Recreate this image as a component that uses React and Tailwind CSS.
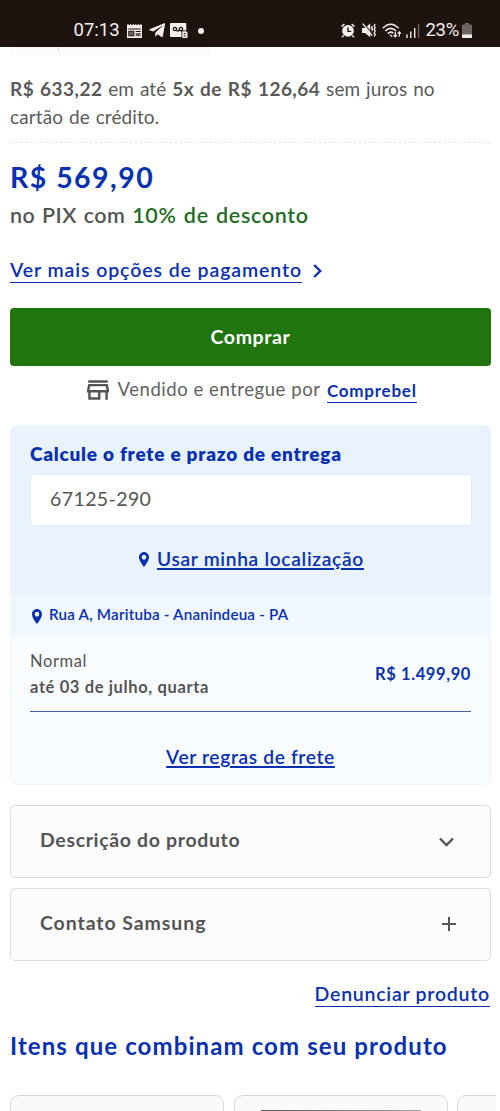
import React, { useState } from "react";

const PinIcon = ({ className }) => (
  <svg viewBox="5 2 14 20" className={className} fill="currentColor" fillRule="evenodd" preserveAspectRatio="none">
    <path d="M12 2C8.13 2 5 5.13 5 9c0 5.25 7 13 7 13s7-7.75 7-13c0-3.87-3.13-7-7-7zm0 10.2a3.2 3.2 0 1 1 0-6.4 3.2 3.2 0 0 1 0 6.4z" />
  </svg>
);

const StoreIcon = () => (
  <svg viewBox="3 4 18 16" className="w-[22px] h-5 text-[#555555]" fill="currentColor">
    <path d="M18.36 9l.6 3H5.04l.6-3h12.72M20 4H4v2h16V4zm0 3H4l-1 5v2h1v6h10v-6h4v6h2v-6h1v-2l-1-5zM6 18v-4h6v4H6z" />
  </svg>
);

function StatusBar() {
  return (
    <header className="flex items-center h-[47px] pt-[14px] pl-[73.5px] bg-[#1f130f] text-[#f3efee] font-[Roboto,sans-serif] text-[18.5px]">
      <span className="w-[53px]">07:13</span>

      {/* News */}
      <svg viewBox="0 0 15 14" className="w-[15px] h-[14px] shrink-0">
        <path d="M0 1h15v13H0z" fill="currentColor" />
        <path d="M1 0v2M3.6 0v2M6.2 0v2M8.8 0v2M11.4 0v2M14 0v2" stroke="currentColor" strokeWidth="1" />
        <path d="M1.3 4.5h12.4v1H1.3zM1.3 6.8h6v5.4h-6zM8.6 7h5.1v1H8.600z" fill="#1f130f" />
        <path d="M2.2 7.6h4.2v3.8H2.2z" fill="#6d6562" />
        <path d="M8.6 9h5.1v3.2H8.6z" fill="#6d6562" />
      </svg>

      {/* Telegram */}
      <svg viewBox="0 0 16 15" className="w-4 h-[15px] ml-[7px] shrink-0" fill="currentColor">
        <path d="M15.2.2L.6 6.2c-.7.3-.6.9 0 1.1l3.7 1.2L12.8 3c.4-.2.7 0 .4.3L6.4 9.6l-.3 3.8c.4 0 .6-.2.9-.5l1.8-1.7 3.6 2.8c.7.4 1.2.2 1.4-.6L16 1.2C16.2.2 15.7 0 15.2.2z" />
      </svg>

      {/* Voicemail */}
      <svg viewBox="0 0 18 15" className="w-[18px] h-[15px] ml-[5px] shrink-0">
        <path d="M1 0h14.5a.8.8 0 0 1 .8.8V14H1a1 1 0 0 1-1-1V1a1 1 0 0 1 1-1z" fill="currentColor" />
        <circle cx="4.9" cy="6" r="1.7" fill="none" stroke="#1f130f" strokeWidth="1.2" />
        <circle cx="11" cy="6" r="1.7" fill="none" stroke="#1f130f" strokeWidth="1.2" />
        <path d="M6.5 5q-.2 3.2 1.5 3.2T9.4 5M11 8.4h2.5" fill="none" stroke="#1f130f" strokeWidth="1.2" />
        <path d="M11.5 7.5h5L18 9v6h-6.500z" fill="#1f130f" />
        <path d="M12.3 8.2h3.8l1.4 1.4V15h-5.2z" fill="currentColor" />
        <path d="M13.8 10.6h2M13.8 12.9h2" stroke="#1f130f" strokeWidth=".9" />
      </svg>
      <span className="w-[6px] h-[6px] ml-[10px] rounded-full bg-current" />

      {/* Alarm */}
      <svg viewBox="0 0 14 15" className="w-[14px] h-[15px] ml-[137px] shrink-0">
        <path d="M.6 3.6L3.4 1M13.4 3.6L10.6 1M2.6 12.4L1 14.2M11.4 12.4L13 14.2" stroke="currentColor" strokeWidth="1.5" />
        <circle cx="7" cy="7.9" r="5.9" fill="currentColor" />
        <path d="M7 4.5v3.9h3.2" fill="none" stroke="#1f130f" strokeWidth="1.4" />
      </svg>

      {/* Muted with vibration */}
      <svg viewBox="0 0 15 15" className="w-[15px] h-[15px] ml-[7px] shrink-0">
        <path d="M0 5h3l5.2-4.6v13.8L3 10H0z" fill="currentColor" />
        <path d="M2 .6l8 10" stroke="#1f130f" strokeWidth="1.2" />
        <path d="M.8.6l9.4 12" stroke="currentColor" strokeWidth="1.4" />
        <path d="M10.4 3l-.8 1.4 1 1.7-1 1.8M13.2 1l-1 1.7 1 1.8-1 1.8 1 1.8-1 1.8 1 1.8-1 1.7" fill="none" stroke="currentColor" strokeWidth="1.3" />
      </svg>

      {/* Wi-Fi */}
      <svg viewBox="0 0 20 15" className="w-5 h-[15px] ml-[5px] shrink-0" fill="none" stroke="currentColor">
        <path d="M.8 5.2q7.9-8 15.8 0M3.3 8q5.4-5.2 10.8 0M5.8 10.6q2.9-2.6 5.4-.4" strokeWidth="1.6" />
        <path d="M8.6 11.2l2 2.2-1 .9-2-2.2z" fill="currentColor" stroke="none" />
        <path d="M13.3 8.8v4.8M11.6 12l1.7 1.8 1.7-1.8M17.3 13.8V9M15.6 10.6l1.7-1.8 1.7 1.8" strokeWidth="1.2" />
      </svg>

      {/* Signal */}
      <svg viewBox="0 0 14 14" className="w-[14px] h-[14px] ml-[4px] shrink-0" stroke="currentColor" strokeWidth="1.4">
        <path d="M1 10.5V14M4.8 7.5V14M8.7 4V14" />
        <path d="M12.6 0V14" opacity=".35" />
      </svg>
      <span className="ml-[6px] w-[36px] tracking-[-0.3px]">23%</span>

      {/* Battery */}
      <svg viewBox="0 0 10 15" className="w-[10px] h-[15px] shrink-0">
        <path d="M3 0h4v1.5h2a1 1 0 0 1 1 1V14a1 1 0 0 1-1 1H1a1 1 0 0 1-1-1V2.5a1 1 0 0 1 1-1h2z" fill="#6d6562" />
        <path d="M0 11.5h10V14a1 1 0 0 1-1 1H1a1 1 0 0 1-1-1z" fill="currentColor" />
      </svg>
    </header>
  );
}

function Price() {
  return (
    <section className="whitespace-nowrap">
      <p className="pt-[19px] pb-[11px] border-b border-dashed border-[#e6e6e6] text-[19px] leading-[28px] tracking-[0.1px] [word-spacing:0.9px] text-[#5a5a5a]">
        <b className="font-bold tracking-[0.45px]">R$ 633,22</b> em até{" "}
        <b className="font-bold tracking-[0.45px]">5x de R$ 126,64</b> sem juros no
        <br />
        cartão de crédito.
      </p>
      <p className="mt-[14px] text-[28.5px] leading-[40px] font-bold tracking-[1.45px] text-[#0a31b0]">R$ 569,90</p>
      <p className="mt-1 text-[21.5px] leading-[28px] font-semibold tracking-[0.4px] [word-spacing:1.2px] text-[#555555]">
        no PIX com <span className="tracking-[0.68px] text-[#226c25]">10% de desconto</span>
      </p>
      <a href="#pagamento" className="mt-[29px] flex items-center text-[19.5px] leading-6 font-semibold text-[#0a31b0]">
        <span className="border-b-[1.5px] border-[#0a31b0] tracking-[0.9px]">Ver mais opções de pagamento</span>
        <svg viewBox="0 0 9 14" className="w-[9px] h-[14px] ml-[11px]" fill="none" stroke="currentColor" strokeWidth="2.4">
          <path d="M1.2 1l6 6-6 6" />
        </svg>
      </a>
    </section>
  );
}

function Shipping() {
  const [cep, setCep] = useState("67125-290");

  return (
    <section className="mt-[22px] h-[360px] rounded-[7px] overflow-hidden text-[#0a31b0] whitespace-nowrap">
      <div className="h-[170px] px-5 pt-[16px] bg-[#e8f3fe]">
        <h2 className="text-[19px] leading-[26px] font-extrabold tracking-[0.76px]">Calcule o frete e prazo de entrega</h2>
        <input
          value={cep}
          onChange={(e) => setCep(e.target.value)}
          className="block w-[442px] h-[52px] mt-[7px] px-[19px] pb-[3px] bg-white border border-[#e4e8ec] rounded-[4px] text-[19.5px] tracking-[0.4px] text-[#555555] outline-none"
        />
        <a href="#localizacao" className="flex items-center justify-center pl-[2px] mt-[20px] text-[19.2px] leading-[26px] font-semibold tracking-[0.68px]">
          <PinIcon className="w-[10px] h-[15px] mr-2" />
          <span className="underline decoration-[1.5px] underline-offset-[2px]">Usar minha localização</span>
        </a>
      </div>

      <div className="flex items-center h-[42px] px-[22px] pb-[3px] bg-[#f0f7ff] text-[15.2px] font-semibold tracking-[0.2px]">
        <PinIcon className="w-[10px] h-[15px] mr-[7px] mt-[3px]" />
        Rua A, Marituba - Ananindeua - PA
      </div>

      <div className="h-[148px] px-[19px] pt-[10px] bg-[#f9fcff] border border-t-0 border-[#edf5fd] rounded-b-[7px]">
        <div className="flex items-center justify-between h-[65px] pb-[7px] border-b border-[#4a62a8] text-[16.5px]">
          <div className="text-[#555555] leading-[26px] pb-[3px]">
            <p className="tracking-[0.6px]">Normal</p>
            <p className="font-bold tracking-[0.63px]">até 03 de julho, quarta</p>
          </div>
          <span className="mb-[3px] font-bold tracking-[0.6px]">R$ 1.499,90</span>
        </div>
        <a href="#regras" className="block mt-[32px] text-center text-[19.2px] leading-[26px] font-semibold tracking-[0.64px] underline decoration-[1.5px] underline-offset-[2px]">
          Ver regras de frete
        </a>
      </div>
    </section>
  );
}

function Accordion({ title, className, children }) {
  return (
    <button className={`flex items-center justify-between w-full h-[73px] pl-[29px] bg-[#fcfcfc] border border-[#dddddd] rounded-[5px] text-[19.5px] font-bold text-[#555555] ${className}`}>
      <span className="pb-[3px]">{title}</span>
      {children}
    </button>
  );
}

export default function App() {
  return (
    <div className="w-[500px] h-[1111px] overflow-hidden bg-white font-[Lato,sans-serif]">
      <StatusBar />

      <main className="pl-[10px] pr-[9px]">
        {/* End of the gallery, scrolled under the status bar */}
        <div className="w-[200px] h-[9px] pl-[48px] bg-[#fcfcfc] rounded-b-[4px]">
          <div className="w-px h-[5px] bg-[#dcdcdc]" />
        </div>

        <Price />

        <button className="mt-[25px] w-full h-[58px] rounded-[4px] bg-[#20750e] text-white text-[19.5px] font-bold tracking-[0.62px]">
          Comprar
        </button>

        <div className="flex items-center mt-[11px] h-[26px] pl-[77px] text-[18.5px] text-[#616161] whitespace-nowrap">
          <StoreIcon />
          <span className="ml-[8.5px] w-[209.5px] tracking-[0.55px]">Vendido e entregue por</span>
          <a href="#loja" className="mt-[2px] border-b-[1.5px] border-[#0a31b0] text-[17px] leading-[22px] font-bold tracking-[0.75px] text-[#0a31b0]">
            Comprebel
          </a>
        </div>

        <Shipping />

        <Accordion title="Descrição do produto" className="mt-5 pr-[36px] tracking-[0.65px]">
          <svg viewBox="0 0 15 10" className="w-[15px] h-[10px]" fill="none" stroke="currentColor" strokeWidth="2.4">
            <path d="M1 1.5L7.5 8 14 1.5" />
          </svg>
        </Accordion>
        <Accordion title="Contato Samsung" className="mt-[9.5px] pr-[34px] tracking-[0.92px]">
          <svg viewBox="0 0 14 14" className="w-[14px] h-[14px]" stroke="currentColor" strokeWidth="2">
            <path d="M7 0v14M0 7h14" />
          </svg>
        </Accordion>

        <div className="flex justify-end mt-[21.5px] pr-px">
          <a href="#denunciar" className="border-b-[1.5px] border-[#0a31b0] text-[19.5px] leading-[24px] font-semibold tracking-[0.75px] text-[#0a31b0]">
            Denunciar produto
          </a>
        </div>

        <h2 className="mt-[22px] text-[24px] leading-[34px] font-bold tracking-[1.1px] text-[#0a31b0] whitespace-nowrap">
          Itens que combinam com seu produto
        </h2>
      </main>

      {/* Carousel */}
      <div className="flex gap-[9.5px] w-[496px] mt-[32px] pl-[10px] overflow-hidden">
        <div className="w-[214px] h-[60px] shrink-0 bg-[#fafafa] border border-[#d9d9d9] rounded-[9px]" />
        <div className="w-[214px] h-[60px] shrink-0 pt-[14px] pl-[26px] bg-[#fafafa] border border-[#d9d9d9] rounded-[9px]">
          <div className="w-[160px] h-[40px] bg-gradient-to-r from-[#555555] to-[#a8a4a4]" />
        </div>
        <div className="w-[214px] h-[60px] shrink-0 bg-[#fafafa] border border-[#d9d9d9] rounded-[9px]" />
      </div>
    </div>
  );
}
